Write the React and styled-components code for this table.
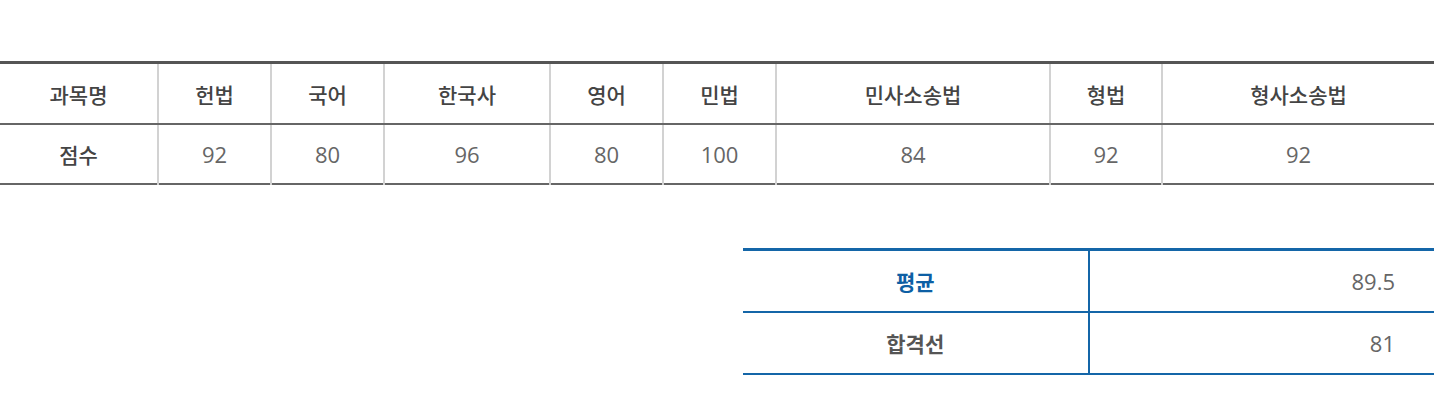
import styled, { createGlobalStyle } from "styled-components";

const GlobalStyle = createGlobalStyle`
  html, body { margin: 0; padding: 0; background: #fff; }
  body { font-family: "Open Sans", "Noto Sans CJK KR", sans-serif; }
`;

/* ── Styles ── */
const Page = styled.div`
  width: 1434px; padding-top: 61px;
  display: flex; flex-direction: column;
`;
const ScoreTable = styled.table`
  width: 100%; border-collapse: collapse; table-layout: fixed;
  border-top: 3px solid #555; border-bottom: 2px solid #666;
`;
const HeadCell = styled.th`
  height: 59px; padding: 0; text-align: center;
  font-size: 21px; font-weight: 500; color: #444;
  border-left: 2px solid #d2d2d2; border-bottom: 2px solid #666;
  &:first-child { border-left: none; }
`;
const RowHead = styled.th`
  height: 58px; padding: 0; text-align: center;
  font-size: 21px; font-weight: 500; color: #444;
`;
const ScoreCell = styled.td`
  height: 58px; padding: 0; text-align: center;
  font-size: 22px; font-weight: 400; color: #666;
  border-left: 2px solid #d2d2d2;
`;
const SummaryTable = styled.table`
  width: 691px; margin: 63px 0 0 auto; border-collapse: collapse; table-layout: fixed;
  border-top: 3px solid #1466a8; border-bottom: 2px solid #1466a8;
`;
const SummaryRow = styled.tr`
  & + & { border-top: 2px solid #1466a8; }
`;
const SummaryLabel = styled.th`
  height: 60px; padding: 0; text-align: center;
  font-size: 21px; font-weight: 700;
  color: ${({ $accent }) => ($accent ? "#0d5fa4" : "#555")};
  border-right: 2px solid #1466a8;
`;
const SummaryValue = styled.td`
  height: 60px; padding: 0 39px 0 0; text-align: right;
  font-size: 22px; color: #666;
`;

const SUBJECTS = [
  { name: "헌법", score: 92, w: 113 },
  { name: "국어", score: 80, w: 113 },
  { name: "한국사", score: 96, w: 166 },
  { name: "영어", score: 80, w: 113 },
  { name: "민법", score: 100, w: 113 },
  { name: "민사소송법", score: 84, w: 274 },
  { name: "형법", score: 92, w: 112 },
  { name: "형사소송법", score: 92, w: 272 },
];

export default function App() {
  return (
    <Page>
      <GlobalStyle />
      <ScoreTable>
        <colgroup>
          <col style={{ width: 158 }} />
          {SUBJECTS.map((s) => <col key={s.name} style={{ width: s.w }} />)}
        </colgroup>
        <thead>
          <tr>
            <HeadCell>과목명</HeadCell>
            {SUBJECTS.map((s) => <HeadCell key={s.name}>{s.name}</HeadCell>)}
          </tr>
        </thead>
        <tbody>
          <tr>
            <RowHead>점수</RowHead>
            {SUBJECTS.map((s) => <ScoreCell key={s.name}>{s.score}</ScoreCell>)}
          </tr>
        </tbody>
      </ScoreTable>

      <SummaryTable>
        <tbody>
          <SummaryRow>
            <SummaryLabel $accent>평균</SummaryLabel>
            <SummaryValue>89.5</SummaryValue>
          </SummaryRow>
          <SummaryRow>
            <SummaryLabel>합격선</SummaryLabel>
            <SummaryValue>81</SummaryValue>
          </SummaryRow>
        </tbody>
      </SummaryTable>
    </Page>
  );
}
